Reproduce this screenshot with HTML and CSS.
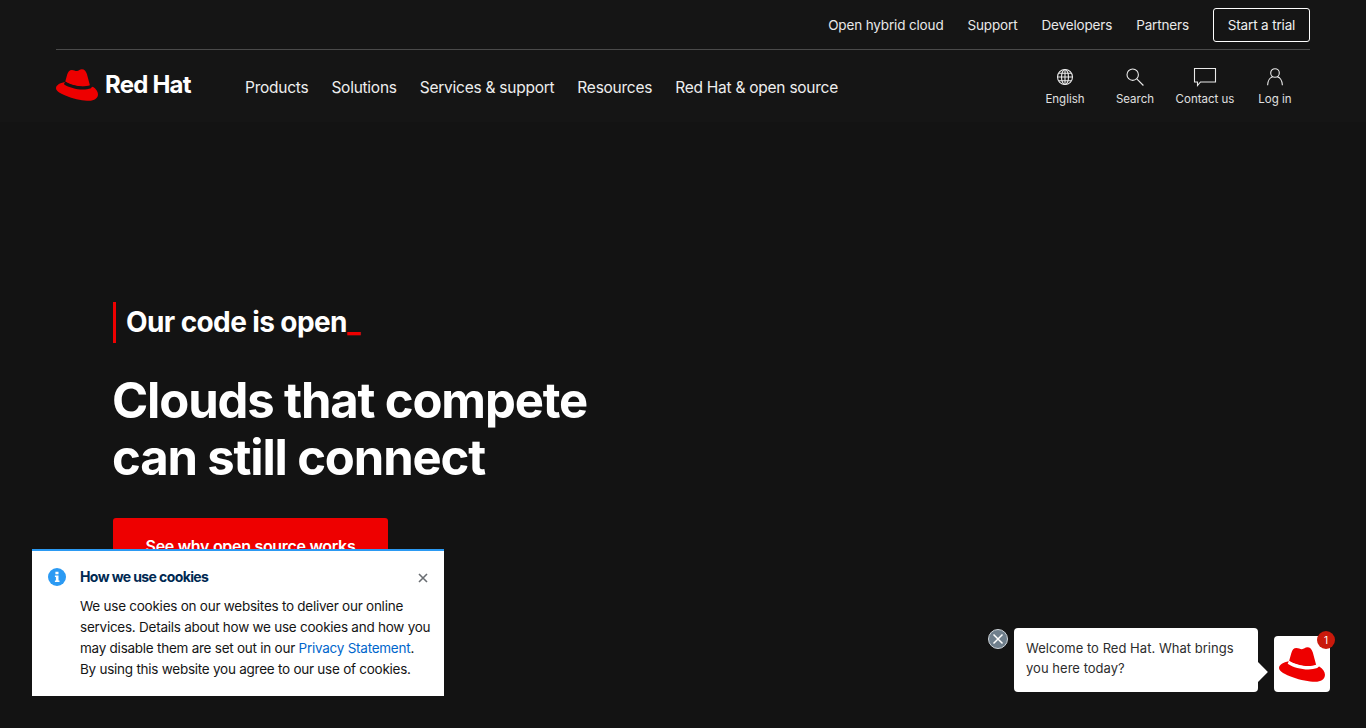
FILE: index.html
```html
<!DOCTYPE html>
<html lang="en">
<head>
<meta charset="utf-8">
<title>Red Hat</title>
<link rel="stylesheet" href="styles.css">
</head>
<body>
<svg class="defs" width="0" height="0" aria-hidden="true">
  <symbol id="hat" viewBox="0 0 42 32">
    <path class="hat-red" d="M9.200 12.800 11.200 5.600C12.100 2.600 13.400.9 15.900.9c1.900 0 3.300 1.100 5 1.100 1.800 0 3-1.700 5-1.700 2.500 0 3.900 1.500 5 4.800l2.800 10.400.3 1.400C27 19 15.600 17 9.200 12.800Z"/>
    <path class="hat-band" d="M9.200 12.600C15.500 16.800 27 18.800 33.900 16.300L35 19.400C27 22.100 15 20 7.800 15.500Z"/>
    <path class="hat-red" d="M7.900 15.300C15 20 27 22.100 35 19.300 35.200 18.700 36 18 36.800 17.800 39.900 19.600 42 22.600 42 25.300 42 29.300 38.300 31.800 33 31.800 22.500 31.800 0 25.200 0 19.200 0 16.200 3.900 14 8.900 13Z"/>
  </symbol>
</svg>

<header class="site-header">
  <div class="util-bar">
    <a class="util-link">Open hybrid cloud</a>
    <a class="util-link">Support</a>
    <a class="util-link">Developers</a>
    <a class="util-link">Partners</a>
    <a class="trial">Start a trial</a>
  </div>
  <nav class="main-nav">
    <a class="brand">
      <svg class="brand-hat"><use href="#hat"/></svg>
      <span class="brand-name">Red Hat</span>
    </a>
    <div class="nav-links">
      <a>Products</a>
      <a>Solutions</a>
      <a>Services &amp; support</a>
      <a>Resources</a>
      <a>Red Hat &amp; open source</a>
    </div>
    <div class="nav-tools">
      <a class="tool">
        <svg class="tool-icon" viewBox="0 0 20 20"><circle cx="10" cy="10" r="7.500"/><ellipse cx="10" cy="10" rx="3.500" ry="7.500"/><path d="M10 2.500v15M2.500 10h15M3.500 6.300h13M3.500 13.700h13"/></svg>
        <span>English</span>
      </a>
      <a class="tool">
        <svg class="tool-icon" viewBox="0 0 20 20"><circle cx="7.700" cy="7.700" r="5.700"/><path d="m11.800 11.800 6.600 6.700"/></svg>
        <span>Search</span>
      </a>
      <a class="tool">
        <svg class="tool-icon tool-icon-wide" viewBox="0 0 24 20"><path d="M1.500 1.500h21v13.500H7.500l-3 3.500v-3.500h-3Z"/></svg>
        <span>Contact us</span>
      </a>
      <a class="tool">
        <svg class="tool-icon" viewBox="0 0 20 20"><circle cx="10" cy="6" r="4.300"/><path d="M2.600 18.200c.3-4.800 2.700-7.900 5-8.300M17.400 18.200c-.3-4.800-2.700-7.900-5-8.300"/></svg>
        <span>Log in</span>
      </a>
    </div>
  </nav>
</header>

<main class="hero">
  <p class="kicker">Our code is open<span class="cursor">_</span></p>
  <h1 class="headline">Clouds that compete<br>can still connect</h1>
  <a class="cta">See why open source works</a>
</main>

<aside class="cookie">
  <svg class="cookie-info" viewBox="0 0 18 18"><circle cx="9" cy="9" r="9"/><path class="cookie-i" d="M7.400 3.800h3.100v2.500H7.400ZM6.900 7.400h3.600v5h1v1.600H6.900v-1.600h1v-3.400h-1Z"/></svg>
  <div class="cookie-body">
    <h2 class="cookie-title">How we use cookies</h2>
    <p class="cookie-text">We use cookies on our websites to deliver our online<br>services. Details about how we use cookies and how you<br>may disable them are set out in our <a class="cookie-link">Privacy Statement</a>.<br>By using this website you agree to our use of cookies.</p>
  </div>
  <svg class="cookie-close" viewBox="0 0 10 10"><path d="m1 1 8 8M9 1 1 9"/></svg>
</aside>

<aside class="chat">
  <span class="chat-dismiss"><svg viewBox="0 0 20 20"><path d="m5 5 10 10M15 5 5 15"/></svg></span>
  <div class="chat-bubble">Welcome to Red Hat. What brings you here today?</div>
  <div class="chat-launcher">
    <svg class="chat-hat"><use href="#hat"/></svg>
    <span class="chat-badge">1</span>
  </div>
</aside>
</body>
</html>
```
FILE: styles.css
```css
* { box-sizing: border-box; }
html, body { height: 100%; }
body {
  margin: 0;
  height: 728px;
  overflow: hidden;
  background: #131313;
  color: #fff;
  font-family: "Inter", "Liberation Sans", sans-serif;
}
.defs { position: absolute; }
.hat-red { fill: #ee0000; }
.hat-band { fill: var(--hat-band, #151515); }

.site-header { background: #151515; height: 122px; padding: 0 56px; }
.util-bar {
  height: 50px;
  border-bottom: 1px solid #4a4a4a;
  display: flex;
  justify-content: flex-end;
  align-items: center;
  gap: 24px;
  font-size: 13.500px;
  letter-spacing: -.15px;
}
.util-link { color: #e8e8e8; }
.trial {
  border: 1px solid #fff;
  border-radius: 3px;
  height: 34px;
  width: 97px;
  display: flex;
  align-items: center;
  justify-content: center;
  color: #f0f0f0;
}
.main-nav { display: flex; align-items: flex-start; }
.brand { display: flex; align-items: center; gap: 6px; margin-top: 19px; width: 189px; }
.brand-hat { width: 42px; height: 32px; }
.brand-name { font-size: 24px; font-weight: 700; letter-spacing: -.8px; margin-top: -2px; margin-left: 1px; }
.nav-links { display: flex; gap: 23px; font-size: 15.500px; margin-top: 28px; color: #eee; letter-spacing: -.25px; }
.nav-tools { margin-left: auto; display: flex; margin-top: 17px; }
.tool { width: 70px; display: flex; flex-direction: column; align-items: center; font-size: 11.500px; color: #e0e0e0; gap: 5px; }
.tool-icon { width: 20px; height: 20px; fill: none; stroke: #eaeaea; stroke-width: 1.100; }
.tool-icon-wide { width: 24px; }

.hero { padding: 180px 0 0 113px; }
.kicker {
  margin: 0;
  height: 41px;
  border-left: 3px solid #ee0000;
  padding: 0 0 2px 10px;
  display: flex;
  align-items: center;
  font-size: 28px;
  font-weight: 700;
  letter-spacing: -.6px;
}
.cursor { color: #ee0000; }
.headline { margin: 29px 0 0 -1px; font-size: 49px; line-height: 57px; font-weight: 700; letter-spacing: -1.150px; }
.cta {
  margin-top: 32px;
  width: 275px;
  height: 56px;
  background: #ee0000;
  border-radius: 3px;
  display: flex;
  align-items: center;
  justify-content: center;
  font-size: 16px;
  font-weight: 600;
  letter-spacing: -.3px;
}

.cookie {
  position: fixed;
  left: 32px;
  top: 549px;
  width: 412px;
  height: 147px;
  background: #fff;
  border-top: 2px solid #2b9af3;
  display: flex;
  align-items: flex-start;
  padding: 17px 15px 0 16px;
}
.cookie-info { width: 18px; height: 18px; fill: #2b9af3; flex: none; }
.cookie-i { fill: #fff; }
.cookie-body { margin-left: 14px; flex: 1; min-width: 0; }
.cookie-title { margin: 0; font-size: 14px; line-height: 18px; font-weight: 700; color: #002952; letter-spacing: -.6px; }
.cookie-text { margin: 10px -11px 0 0; font-size: 13.500px; line-height: 21px; color: #151515; letter-spacing: -.25px; white-space: nowrap; }
.cookie-link { color: #0066cc; }
.cookie-close { width: 10px; height: 10px; margin: 5px 1px 0 0; flex: none; fill: none; stroke: #6a6e73; stroke-width: 1.600; }

.chat { position: fixed; left: 988px; top: 628px; display: flex; align-items: flex-start; }
.chat-dismiss {
  width: 20px;
  height: 20px;
  margin-top: 1px;
  border-radius: 50%;
  background: #6f7f8c;
  border: 1px solid #cfd5da;
  flex: none;
}
.chat-dismiss svg { display: block; width: 18px; height: 18px; fill: none; stroke: #fff; stroke-width: 1.600; }
.chat-bubble {
  position: relative;
  margin-left: 6px;
  width: 244px;
  height: 64px;
  background: #fff;
  border-radius: 4px;
  padding: 10px 12px;
  font-size: 13px;
  line-height: 20px;
  color: #2d2d2d;
  letter-spacing: .03px;
}
.chat-bubble::after {
  content: "";
  position: absolute;
  right: -7px;
  top: 37px;
  width: 14px;
  height: 14px;
  background: #fff;
  transform: rotate(45deg);
}
.chat-launcher {
  position: relative;
  margin: 8px 0 0 16px;
  width: 56px;
  height: 56px;
  background: #fff;
  border-radius: 4px;
  display: flex;
  align-items: center;
  justify-content: center;
}
.chat-hat { --hat-band: #fff; width: 46px; height: 35px; }
.chat-badge {
  position: absolute;
  right: -5px;
  top: -5px;
  width: 18px;
  height: 18px;
  border-radius: 50%;
  background: #c9190b;
  color: #fff;
  font-size: 10px;
  display: flex;
  align-items: center;
  justify-content: center;
}
```
